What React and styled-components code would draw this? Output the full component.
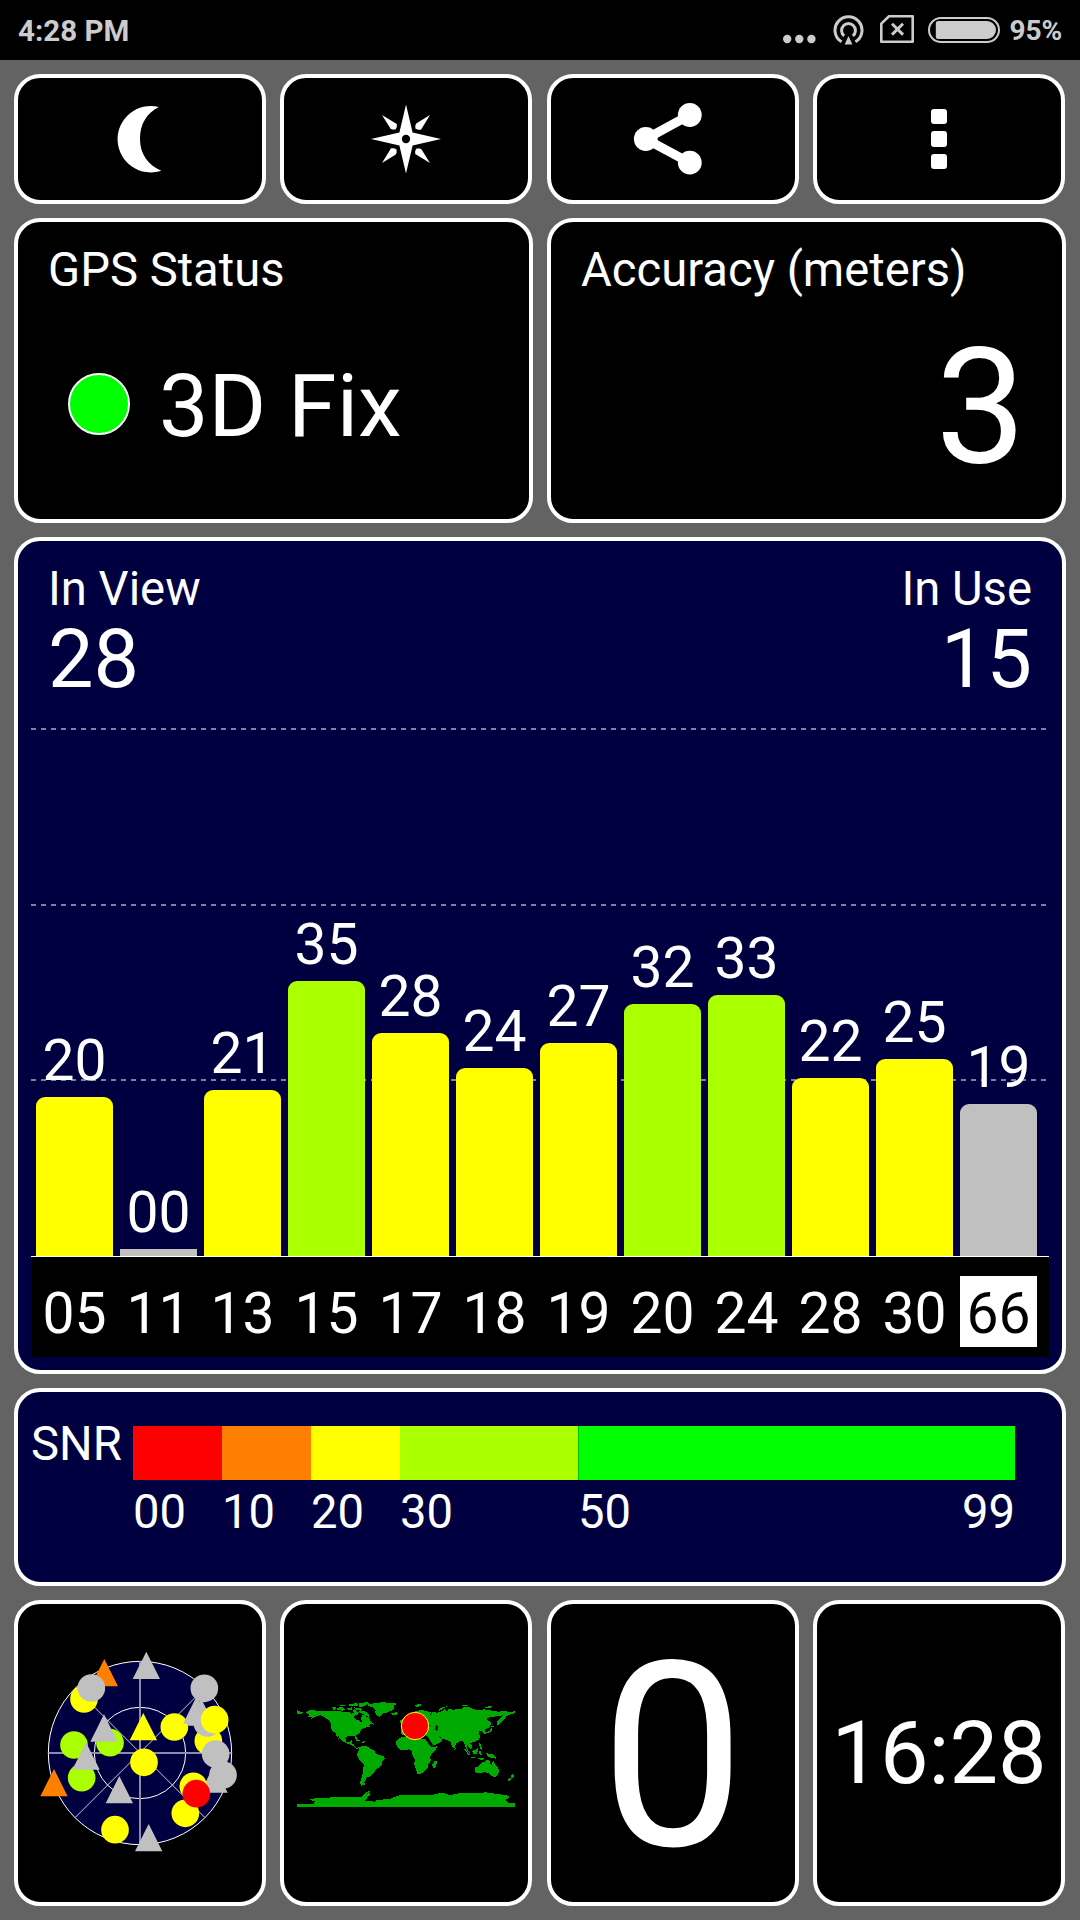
import React from "react";
import styled, { createGlobalStyle } from "styled-components";

const NAVY = "#000040";
const SILVER = "#c0c0c0";
const YELLOW = "#ffff00";
const LIME = "#aaff00";
const ORANGE = "#ff8000";

const GlobalStyle = createGlobalStyle`
  * {
    box-sizing: border-box;
  }
  body {
    margin: 0;
    background: #636363;
    color: #ffffff;
    font-family: Roboto, "Liberation Sans", sans-serif;
  }
  svg {
    display: block;
    flex: none;
  }
`;

const Screen = styled.div`
  display: flex;
  flex-direction: column;
  width: 1080px;
  height: 1920px;
  overflow: hidden;
  background: #636363;
`;

const StatusBar = styled.header`
  display: flex;
  align-items: center;
  height: 60px;
  padding: 0 18px;
  background: #000000;
  color: #cccccc;
  font-size: 29.5px;
  font-weight: 700;
`;

const Clock = styled.span`
  flex: 1;
  line-height: 60px;
  padding-top: 1px;
`;

const StatusIcons = styled.div`
  display: flex;
  align-items: center;
`;

const IconSlot = styled.div`
  margin-right: ${props => props.gap}px;
`;

const BatteryLevel = styled.span`
  padding-top: 1px;
  font-size: 28px;
  line-height: 60px;
  letter-spacing: -0.1px;
`;

const Board = styled.main`
  display: flex;
  flex-direction: column;
  gap: 14px;
  width: 1052px;
  margin: 14px 0 0 14px;
`;

const Row = styled.div`
  display: grid;
  grid-template-columns: repeat(${props => props.cols}, minmax(0, 1fr));
  gap: ${props => (props.cols === 4 ? "14.33px" : "14px")};
  width: ${props => (props.cols === 4 ? "1051px" : "auto")};
  height: ${props => props.height}px;
`;

const Card = styled.section`
  display: flex;
  flex-direction: column;
  min-width: 0;
  border: 4px solid #ffffff;
  border-radius: 26px;
  background: ${props => (props.navy ? NAVY : "#000000")};
`;

const CenterCard = styled(Card)`
  align-items: center;
  justify-content: center;
`;

const InfoCard = styled(Card)`
  padding: 20px 30px 0;
`;

const Title = styled.div`
  font-size: 47.2px;
  line-height: 56px;
  white-space: nowrap;
`;

const FixRow = styled.div`
  display: flex;
  align-items: center;
  margin: 56px 0 0 20px;
`;

const FixLamp = styled.div`
  width: 62px;
  height: 62px;
  margin: 0 29px 4px 0;
  border: 2px solid #ffffff;
  border-radius: 50%;
  background: #00ff00;
`;

const FixText = styled.div`
  font-size: 88px;
  line-height: 104px;
`;

const AccuracyValue = styled.div`
  margin-top: 15px;
  padding-right: 6px;
  font-size: 161px;
  line-height: 188px;
  text-align: right;
`;

const MenuDots = styled.div`
  display: flex;
  flex-direction: column;
  gap: 7px;
`;

const MenuDot = styled.div`
  width: 16px;
  height: 15.5px;
  border-radius: 3px;
  background: #ffffff;
`;

const ChartCard = styled(Card)`
  height: 837px;
`;

const ChartHeader = styled.div`
  display: flex;
  justify-content: space-between;
  padding: 20px 30px 0;
`;

const Counter = styled.div`
  text-align: ${props => (props.right ? "right" : "left")};
`;

const Count = styled.div`
  padding-top: 1px;
  font-size: 81px;
  line-height: 83px;
`;

/* grid lines and bars share one grid cell, bars painted on top */
const Plot = styled.div`
  display: grid;
  width: 1018px;
  height: 529px;
  margin: 27px 0 0 13px;
  border-bottom: 1px solid #ffffff;
`;

const GridLines = styled.div`
  grid-area: 1 / 1;
  display: flex;
  flex-direction: column;
  padding-right: 3px;
`;

const GridLine = styled.div`
  flex: none;
  height: 2px;
  margin-bottom: 173.6px;
  background: repeating-linear-gradient(
    to right,
    #8080a0 0,
    #8080a0 5px,
    transparent 5px,
    transparent 10px
  );
`;

const Bars = styled.div`
  grid-area: 1 / 1;
  z-index: 1;
  display: flex;
  align-items: flex-end;
  gap: 7px;
  padding-left: 5px;
`;

const BarColumn = styled.div`
  display: flex;
  flex-direction: column;
  width: 77px;
`;

const BarValue = styled.div`
  margin-bottom: 6px;
  font-size: 57px;
  line-height: 60px;
  text-align: center;
`;

const Bar = styled.div`
  border-radius: ${props => (props.flat ? 0 : "9px 9px 0 0")};
  background: ${props => props.color};
`;

const SatRow = styled.div`
  display: flex;
  gap: 7px;
  width: 1018px;
  height: 100px;
  margin-left: 13px;
  padding: 19px 0 0 5px;
  background: #000000;
`;

const SatId = styled.div`
  width: 77px;
  height: 71px;
  font-size: 57px;
  line-height: 75px;
  text-align: center;
  background: ${props => (props.active ? "#ffffff" : "transparent")};
  color: ${props => (props.active ? "#000000" : "#ffffff")};
`;

const SnrCard = styled(Card)`
  flex-direction: row;
  height: 198px;
  padding: 34px 47px 0 13px;
`;

const SnrTitle = styled(Title)`
  width: 102px;
  margin-top: -10px;
`;

const SnrScale = styled.div`
  display: flex;
  flex: 1;
`;

const SnrBand = styled.div`
  flex: ${props => props.span} 1 0;
  min-width: 0;
`;

const SnrColor = styled.div`
  height: 54px;
  border-left: ${props => (props.divider ? "1px solid rgba(0, 0, 0, 0.25)" : "0")};
  background: ${props => props.color};
`;

const SnrLabels = styled.div`
  display: flex;
  justify-content: space-between;
  margin-top: 4px;
`;

const BigDigit = styled.div`
  padding-top: 7px;
  font-size: 258px;
  line-height: 1;
`;

const LocalTime = styled.div`
  padding-top: 2px;
  font-size: 86.4px;
  line-height: 1;
`;

const satellites = [
  { id: "05", snr: "20", height: 159, color: YELLOW },
  { id: "11", snr: "00", height: 7, color: SILVER, flat: true },
  { id: "13", snr: "21", height: 166, color: YELLOW },
  { id: "15", snr: "35", height: 275, color: LIME },
  { id: "17", snr: "28", height: 223, color: YELLOW },
  { id: "18", snr: "24", height: 188, color: YELLOW },
  { id: "19", snr: "27", height: 213, color: YELLOW },
  { id: "20", snr: "32", height: 252, color: LIME },
  { id: "24", snr: "33", height: 261, color: LIME },
  { id: "28", snr: "22", height: 178, color: YELLOW },
  { id: "30", snr: "25", height: 197, color: YELLOW },
  { id: "66", snr: "19", height: 152, color: SILVER, active: true }
];

const bands = [
  { from: "00", span: 89, color: "#ff0000" },
  { from: "10", span: 89, color: ORANGE },
  { from: "20", span: 89, color: YELLOW },
  { from: "30", span: 178, color: LIME },
  { from: "50", span: 437, color: "#00ff00", to: "99" }
];

// drawn in order, later ones cover earlier ones; "t" is a triangle
const skyMarks = [
  ["t", 223, 98, ORANGE],
  ["t", 349, 76, SILVER],
  ["c", 162, 177, YELLOW],
  ["c", 184, 144, SILVER],
  ["c", 132, 315, LIME],
  ["c", 240, 308, LIME],
  ["t", 222, 264, SILVER],
  ["c", 155, 413, LIME],
  ["t", 168, 348, SILVER],
  ["t", 72, 428, ORANGE],
  ["t", 268, 449, SILVER],
  ["t", 340, 260, YELLOW],
  ["c", 342, 367, YELLOW],
  ["c", 433, 261, YELLOW],
  ["c", 255, 569, YELLOW],
  ["t", 356, 593, SILVER],
  ["c", 535, 303, YELLOW],
  ["c", 532, 249, SILVER],
  ["t", 500, 210, SILVER],
  ["t", 513, 216, SILVER],
  ["c", 523, 145, SILVER],
  ["c", 554, 239, YELLOW],
  ["c", 557, 342, SILVER],
  ["t", 552, 417, SILVER],
  ["c", 579, 405, SILVER],
  ["c", 490, 439, YELLOW],
  ["c", 466, 520, YELLOW],
  ["c", 499, 461, "#ff0000"]
];

const land = [
  // north america
  "64,96 72,91 86,90 100,94 122,93 140,94 160,93 176,96 192,95 200,101 206,98 204,90 210,88 216,95 222,97 218,104 210,104 206,112 212,118 224,122 228,130 231,124 228,116 232,106 240,106 246,112 252,112 256,122 262,128 266,134 256,132 250,136 256,140 246,142 238,144 228,149 225,158 214,166 215,177 210,176 208,167 198,169 188,169 181,176 184,186 192,187 197,181 202,182 200,190 208,192 209,200 215,203 222,202 218,207 210,204 203,197 190,192 175,186 168,178 158,166 162,178 154,168 152,160 142,152 137,142 138,130 130,120 118,112 106,106 94,108 86,114 72,119 82,112 70,110 74,104 66,102",
  "222,93 236,92 244,97 252,104 252,110 242,108 236,102 226,99",
  "140,82 150,80 154,86 146,90",
  "156,84 172,80 180,88 172,92 158,90",
  "164,74 182,74 180,79 166,79",
  "184,86 200,82 204,88 194,91",
  "190,72 214,70 220,76 206,79 192,77",
  "208,82 220,84 232,86 228,92 214,90",
  "222,70 240,67 256,68 246,74 234,80 222,80",
  // greenland, iceland, spitsbergen
  "250,73 268,70 290,67 312,68 338,71 326,78 326,86 320,92 304,98 292,101 284,110 276,106 270,98 272,90 264,82 250,78",
  "318,99 326,98 336,97 340,101 332,105 322,104",
  "386,74 408,73 406,78 396,81 390,78",
  // caribbean
  "208,180 216,177 228,183 222,185 214,182",
  "229,185 240,184 238,188 230,188",
  // south america
  "222,202 232,197 248,200 256,207 268,211 272,220 284,225 298,230 299,237 291,246 289,258 278,264 271,272 264,282 256,290 246,291 242,300 238,306 240,314 228,318 225,306 230,294 235,270 236,252 224,240 216,227 218,218 222,210",
  // europe and asia
  "380,100 392,94 408,90 424,93 438,97 436,104 428,104 438,106 442,96 456,98 470,94 478,88 486,94 492,86 504,90 520,86 530,88 536,82 548,80 562,86 576,91 598,88 620,92 640,95 662,93 676,97 690,92 690,100 676,103 664,108 660,116 650,124 638,138 636,126 646,114 656,106 640,108 622,111 608,113 604,120 616,124 618,134 610,144 600,148 602,158 596,158 592,152 580,152 582,160 586,170 582,178 572,184 562,186 556,190 562,198 558,207 550,200 546,194 546,206 554,218 548,214 542,204 538,190 532,182 522,184 512,192 508,206 502,200 496,186 488,180 476,178 466,172 472,178 468,186 456,192 442,197 434,184 426,170 420,164 350,164 348,150 360,138 360,122",
  "346,120 354,118 356,130 346,130",
  // africa
  "350,172 370,168 390,178 420,176 430,190 440,201 456,199 452,210 438,224 434,232 438,242 430,252 428,262 416,276 406,282 398,282 392,266 387,252 390,240 382,224 380,214 372,208 350,211 340,204 333,194 334,184 342,174",
  "447,245 454,241 456,248 450,264 443,264 442,254",
  // japan
  "592,154 604,157 614,152 618,144 622,146 620,154 606,160 598,161",
  "618,138 628,140 620,143",
  // indonesia and philippines
  "537,205 544,210 556,226 552,226 540,212",
  "554,230 568,231 576,235 560,235",
  "562,212 572,210 578,203 580,212 574,224 564,222",
  "582,213 592,212 586,216 590,224 584,224",
  "581,190 586,190 590,203 592,210 586,208",
  "602,218 612,222 626,224 636,238 626,234 616,234 606,226",
  "578,235 598,235 592,239 580,238",
  // australia, new zealand
  "569,263 582,258 590,248 600,244 604,240 614,242 614,250 620,254 624,240 630,252 640,264 642,276 636,288 628,292 618,286 610,280 598,276 586,280 572,279",
  "622,232 634,230 630,235",
  "681,282 687,288 681,295 677,292",
  "676,293 680,296 672,303 667,300",
  // chukotka across the date line
  "36,88 42,94 54,98 50,102 36,101",
  "508,206 512,205 511,210 508,209",
  "462,88 474,81 486,79 474,86 464,93",
  "528,74 548,74 550,79 532,78",
  "598,80 620,79 618,83 600,83",
  // antarctica
  "36,372 86,372 86,366 94,363 68,360 88,355 94,353 120,354 150,351 184,350 216,352 232,350 236,344 254,339 256,345 248,350 246,358 236,361 256,364 270,365 276,359 312,358 330,350 346,345 380,346 420,345 446,344 464,339 486,341 492,346 520,340 548,338 586,339 602,337 630,341 650,344 670,347 672,352 662,360 670,368 690,370 690,381 36,381",
  "236,342 256,331 254,336 240,344"
];

const Moon = () => (
  <svg width="68" height="68" viewBox="105.2 105 68 68" fill="#fff">
    <path d="M158 107A33.2 33.2 0 1 0 160.5 170.7C147 165 139.2 154 139.2 139C139.2 124 146 113 158 107Z" />
  </svg>
);

const kite = "M-24 -24L-9.2 -15L-9.2 -12L-10.5 -9.4L-13.6 -9.4L-15.4 -10.2Z";

const Compass = () => (
  <svg width="72" height="72" viewBox="-36 -36 72 72" fill="#fff">
    <path d="M0 -34.5L6.6 -6.4L35 0L6.6 6.4L0 34.5L-6.6 6.4L-35 0L-6.6 -6.4Z" />
    {[0, 90, 180, 270].map(angle => (
      <path key={angle} d={kite} transform={`rotate(${angle})`} />
    ))}
    <circle r="4.2" fill="#000" />
  </svg>
);

const Share = () => (
  <svg width="80" height="74" viewBox="633 102 80 74" fill="#fff">
    <path
      d="M689.8 115L645.8 139L689.8 162.7"
      fill="none"
      stroke="#fff"
      strokeWidth="9.2"
    />
    <circle cx="689.8" cy="115" r="11.9" />
    <circle cx="645.8" cy="139" r="11.9" />
    <circle cx="689.8" cy="162.7" r="11.9" />
  </svg>
);

const MoreIcon = () => (
  <svg width="33" height="28" viewBox="0 0 33 28" fill="#ccc">
    <circle cx="4.2" cy="23" r="4.2" />
    <circle cx="16.3" cy="23" r="4.2" />
    <circle cx="28.4" cy="23" r="4.2" />
  </svg>
);

const Hotspot = () => (
  <svg width="31" height="31" viewBox="0 0 31 31" fill="none" stroke="#ccc">
    <path d="M8.6 26.8A13.5 13.5 0 1 1 22.4 26.8" strokeWidth="3" />
    <path d="M11.2 20.9A6.9 6.9 0 1 1 19.8 20.9" strokeWidth="3" />
    <path d="M15.5 21L19.4 29.5H11.6Z" fill="#ccc" stroke="none" />
  </svg>
);

const NoSim = () => (
  <svg width="34" height="30" viewBox="0 0 34 30" fill="none" stroke="#ccc">
    <path d="M9 1.3H32.7V26.7H1.3V8.6Z" strokeWidth="2.6" strokeLinejoin="round" />
    <path d="M12 8.7L23 19.6M23 8.7L12 19.6" strokeWidth="3" />
  </svg>
);

const Battery = () => (
  <svg width="72" height="26" viewBox="0 0 72 26">
    <rect x="1" y="1" width="70" height="24" rx="12" fill="none" stroke="#ccc" strokeWidth="2" />
    <path d="M10 4H59A9 9 0 0 1 59 22H10Q7.8 22 7.8 20V6Q7.8 4 10 4Z" fill="#ccc" />
  </svg>
);

const SkyView = () => (
  <svg width="220" height="230" viewBox="0 -6 660 690">
    <circle cx="330" cy="339" r="275" fill={NAVY} stroke="#fff" strokeWidth="3" />
    <circle cx="330" cy="339" r="137" fill="none" stroke="#fff" strokeWidth="3" />
    <path d="M330 64V612M56 339H604" stroke="#8c8ca8" strokeWidth="6" />
    <path d="M136 532L524 144M136 144L524 532" stroke="#fff" strokeWidth="2.4" />
    {skyMarks.map(([kind, x, y, color], i) =>
      kind === "c" ? (
        <circle key={i} cx={x} cy={y} r="41.5" fill={color} />
      ) : (
        <path key={i} d={`M${x} ${y - 41}L${x + 41} ${y + 41}H${x - 41}Z`} fill={color} />
      )
    )}
  </svg>
);

const WorldMap = () => (
  <svg width="240" height="140" viewBox="3 9 720 420">
    <g fill="#00aa00" shapeRendering="crispEdges">
      {land.map(points => (
        <polygon key={points} points={points} />
      ))}
    </g>
    <path d="M452 136L460 138L457 152L451 150Z" fill="#000" />
    <path d="M425 168L444 197M462 168L470 176M425 137H436" stroke="#000" strokeWidth="3" />
    <circle cx="390" cy="138" r="41" fill="#ff0000" stroke="#ffff00" strokeWidth="3" />
  </svg>
);

const Satellite = ({ sat }) => (
  <BarColumn>
    <BarValue>{sat.snr}</BarValue>
    <Bar color={sat.color} flat={sat.flat} style={{ height: sat.height }} />
  </BarColumn>
);

const App = () => {
  return (
    <Screen>
      <GlobalStyle />
      <StatusBar>
        <Clock>4:28 PM</Clock>
        <StatusIcons>
          <IconSlot gap={17}>
            <MoreIcon />
          </IconSlot>
          <IconSlot gap={16}>
            <Hotspot />
          </IconSlot>
          <IconSlot gap={14}>
            <NoSim />
          </IconSlot>
          <IconSlot gap={9}>
            <Battery />
          </IconSlot>
          <BatteryLevel>95%</BatteryLevel>
        </StatusIcons>
      </StatusBar>

      <Board>
        <Row cols={4} height={130}>
          <CenterCard>
            <Moon />
          </CenterCard>
          <CenterCard>
            <Compass />
          </CenterCard>
          <CenterCard>
            <Share />
          </CenterCard>
          <CenterCard>
            <MenuDots>
              <MenuDot />
              <MenuDot />
              <MenuDot />
            </MenuDots>
          </CenterCard>
        </Row>

        <Row cols={2} height={305}>
          <InfoCard>
            <Title>GPS Status</Title>
            <FixRow>
              <FixLamp />
              <FixText>3D Fix</FixText>
            </FixRow>
          </InfoCard>
          <InfoCard>
            <Title>Accuracy (meters)</Title>
            <AccuracyValue>3</AccuracyValue>
          </InfoCard>
        </Row>

        <ChartCard navy>
          <ChartHeader>
            <Counter>
              <Title>In View</Title>
              <Count>28</Count>
            </Counter>
            <Counter right>
              <Title>In Use</Title>
              <Count>15</Count>
            </Counter>
          </ChartHeader>
          <Plot>
            <GridLines>
              <GridLine />
              <GridLine />
              <GridLine />
            </GridLines>
            <Bars>
              {satellites.map(sat => (
                <Satellite key={sat.id} sat={sat} />
              ))}
            </Bars>
          </Plot>
          <SatRow>
            {satellites.map(sat => (
              <SatId key={sat.id} active={sat.active}>
                {sat.id}
              </SatId>
            ))}
          </SatRow>
        </ChartCard>

        <SnrCard navy>
          <SnrTitle>SNR</SnrTitle>
          <SnrScale>
            {bands.map(band => (
              <SnrBand key={band.from} span={band.span}>
                <SnrColor color={band.color} divider={band.from === "50"} />
                <SnrLabels>
                  <Title>{band.from}</Title>
                  {band.to && <Title>{band.to}</Title>}
                </SnrLabels>
              </SnrBand>
            ))}
          </SnrScale>
        </SnrCard>

        <Row cols={4} height={306}>
          <CenterCard>
            <SkyView />
          </CenterCard>
          <CenterCard>
            <WorldMap />
          </CenterCard>
          <CenterCard>
            <BigDigit>0</BigDigit>
          </CenterCard>
          <CenterCard>
            <LocalTime>16:28</LocalTime>
          </CenterCard>
        </Row>
      </Board>
    </Screen>
  );
};

export default App;
